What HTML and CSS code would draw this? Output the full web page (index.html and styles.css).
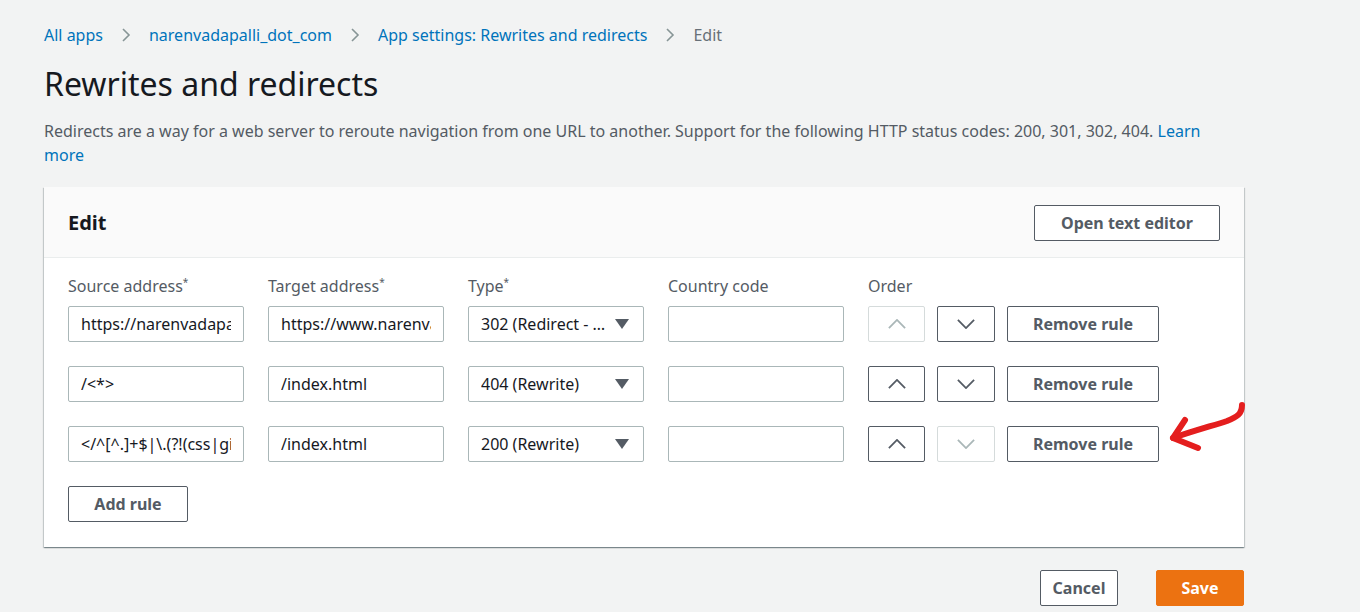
FILE: index.html
```html
<!DOCTYPE html>
<html>
<head>
<meta charset="utf-8">
<link rel="stylesheet" href="styles.css">
</head>
<body>
<div class="page">
  <nav class="crumbs">
    <a>All apps</a>
    <svg class="sep" viewBox="0 0 12 16"><path d="M3 2l6 6-6 6" fill="none" stroke="#879596" stroke-width="1.6"/></svg>
    <a>narenvadapalli_dot_com</a>
    <svg class="sep" viewBox="0 0 12 16"><path d="M3 2l6 6-6 6" fill="none" stroke="#879596" stroke-width="1.6"/></svg>
    <a>App settings: Rewrites and redirects</a>
    <svg class="sep" viewBox="0 0 12 16"><path d="M3 2l6 6-6 6" fill="none" stroke="#879596" stroke-width="1.6"/></svg>
    <span class="current">Edit</span>
  </nav>
  <h1 class="title">Rewrites and redirects</h1>
  <p class="desc">Redirects are a way for a web server to reroute navigation from one URL to another. Support for the following HTTP status codes: 200, 301, 302, 404. <a>Learn more</a></p>

  <section class="card">
    <header class="card-head">
      <h2>Edit</h2>
      <button class="btn">Open text editor</button>
    </header>
    <div class="card-body">
      <div class="labels">
        <div class="col">Source address<sup>*</sup></div>
        <div class="col">Target address<sup>*</sup></div>
        <div class="col">Type<sup>*</sup></div>
        <div class="col">Country code</div>
        <div class="col">Order</div>
      </div>

      <div class="row">
        <input class="field col" readonly value="https://narenvadapalli.com">
        <input class="field col" readonly value="https://www.narenvadapalli.com">
        <div class="field select col"><span class="val">302 (Redirect - Temporary)</span><span class="caret"></span></div>
        <input class="field col" readonly value="">
        <div class="order">
          <button class="ord disabled"><svg viewBox="0 0 20 11"><path d="M1 10l9-9 9 9" fill="none" stroke="currentColor" stroke-width="2"/></svg></button>
          <button class="ord"><svg viewBox="0 0 20 11"><path d="M1 1l9 9 9-9" fill="none" stroke="currentColor" stroke-width="2"/></svg></button>
          <button class="btn remove">Remove rule</button>
        </div>
      </div>

      <div class="row">
        <input class="field col" readonly value="/<*>">
        <input class="field col" readonly value="/index.html">
        <div class="field select col"><span class="val">404 (Rewrite)</span><span class="caret"></span></div>
        <input class="field col" readonly value="">
        <div class="order">
          <button class="ord"><svg viewBox="0 0 20 11"><path d="M1 10l9-9 9 9" fill="none" stroke="currentColor" stroke-width="2"/></svg></button>
          <button class="ord"><svg viewBox="0 0 20 11"><path d="M1 1l9 9 9-9" fill="none" stroke="currentColor" stroke-width="2"/></svg></button>
          <button class="btn remove">Remove rule</button>
        </div>
      </div>

      <div class="row">
        <input class="field col" readonly value="&lt;/^[^.]+$|\.(?!(css|gif|ico|jpg|js|png|txt|svg|woff|ttf)$)([^.]+$)/&gt;">
        <input class="field col" readonly value="/index.html">
        <div class="field select col"><span class="val">200 (Rewrite)</span><span class="caret"></span></div>
        <input class="field col" readonly value="">
        <div class="order">
          <button class="ord"><svg viewBox="0 0 20 11"><path d="M1 10l9-9 9 9" fill="none" stroke="currentColor" stroke-width="2"/></svg></button>
          <button class="ord disabled"><svg viewBox="0 0 20 11"><path d="M1 1l9 9 9-9" fill="none" stroke="currentColor" stroke-width="2"/></svg></button>
          <button class="btn remove">Remove rule</button>
        </div>
      </div>

      <button class="btn add">Add rule</button>
    </div>
  </section>

  <div class="actions">
    <button class="btn cancel">Cancel</button>
    <button class="btn save">Save</button>
  </div>
</div>
<svg class="annot" viewBox="0 0 90 60" width="90" height="60">
  <path d="M77 7 C77 16 72 19 62 23 C50 27 28 33 8 40" fill="none" stroke="#e41e1e" stroke-width="6" stroke-linecap="round"/>
  <path d="M20 22 L8 40 L33 50" fill="none" stroke="#e41e1e" stroke-width="6" stroke-linecap="round" stroke-linejoin="round"/>
</svg>
</body>
</html>
```
FILE: styles.css
```css
* { box-sizing: border-box; }
html, body { margin: 0; padding: 0; }
body {
  background: #f2f3f3;
  font-family: "Noto Sans", "Liberation Sans", Arial, sans-serif;
  color: #16191f;
  font-size: 16px;
  position: relative;
  width: 1360px;
  height: 612px;
  overflow: hidden;
}
.page {
  width: 1200px;
  margin-left: 44px;
  padding-top: 23px;
}
a { color: #0073bb; cursor: pointer; }
.crumbs {
  display: flex;
  align-items: center;
  height: 24px;
  font-size: 16px;
  line-height: 24px;
}
.crumbs .sep { width: 12px; height: 16px; margin: 0 17px 0 17px; }
.crumbs .current { color: #687078; }
.title {
  font-size: 32px;
  font-weight: 400;
  margin: 17px 0 0 0;
  line-height: 40px;
}
.desc {
  margin: 15px 0 0 0;
  font-size: 16px;
  line-height: 24px;
  color: #545b64;
  width: 1200px;
}
.card {
  margin-top: 20px;
  background: #fff;
  box-shadow: 0 1px 1px 0 rgba(0,28,36,.3), 1px 1px 1px 0 rgba(0,28,36,.15), -1px 1px 1px 0 rgba(0,28,36,.15);
}
.card-head {
  height: 71px;
  background: #fafafa;
  border-bottom: 1px solid #eaeded;
  display: flex;
  align-items: center;
  justify-content: space-between;
  padding: 0 24px;
}
.card-head h2 {
  margin: 0;
  font-size: 20px;
  font-weight: 700;
  color: #16191f;
}
.btn {
  font-family: inherit;
  font-size: 16px;
  font-weight: 700;
  color: #545b64;
  background: #fff;
  border: 1px solid #545b64;
  border-radius: 2px;
  height: 36px;
  padding: 0 20px;
  cursor: pointer;
}
.card-head .btn { width: 186px; margin-top: 1px; }
.card-body {
  padding: 16px 24px 25px 24px;
}
.labels, .row {
  display: flex;
  gap: 24px;
}
.col { width: 176px; flex: none; }
.labels {
  color: #545b64;
  line-height: 24px;
  height: 24px;
  margin-bottom: 8px;
}
.labels sup { font-size: 10px; line-height: 0; vertical-align: 6px; }
.row { margin-bottom: 24px; }
.field {
  height: 36px;
  border: 1px solid #aab7b8;
  border-radius: 2px;
  padding: 0 12px;
  line-height: 34px;
  white-space: nowrap;
  overflow: hidden;
  color: #16191f;
  font-family: inherit;
  font-size: 16px;
  background: #fff;
  margin: 0;
  outline: none;
}
.select {
  display: flex;
  align-items: center;
  padding-right: 14px;
}
.select .val {
  flex: 1;
  overflow: hidden;
  text-overflow: ellipsis;
  white-space: nowrap;
}
.caret {
  width: 0; height: 0;
  border-left: 7px solid transparent;
  border-right: 7px solid transparent;
  border-top: 10px solid #545b64;
  margin-left: 6px;
  flex: none;
}
.order { display: flex; gap: 12px; }
.ord {
  width: 58px;
  height: 36px;
  border: 1px solid #545b64;
  border-radius: 2px;
  background: #fff;
  color: #545b64;
  display: flex;
  align-items: center;
  justify-content: center;
  padding: 0;
}
.ord:first-child { width: 57px; }
.ord svg { width: 18px; height: 10px; }
.ord.disabled { border-color: #d5dbdb; color: #aab7b8; }
.remove { width: 152px; padding: 0; }
.add { width: 120px; padding: 0; margin-top: 0; display: block; }
.actions {
  display: flex;
  justify-content: flex-end;
  margin-top: 23px;
  gap: 38px;
}
.cancel { width: 78px; padding: 0; }
.save {
  width: 88px;
  padding: 0;
  background: #ec7211;
  border-color: #ec7211;
  color: #fff;
}
.annot {
  position: absolute;
  left: 1165px;
  top: 398px;
}
```
